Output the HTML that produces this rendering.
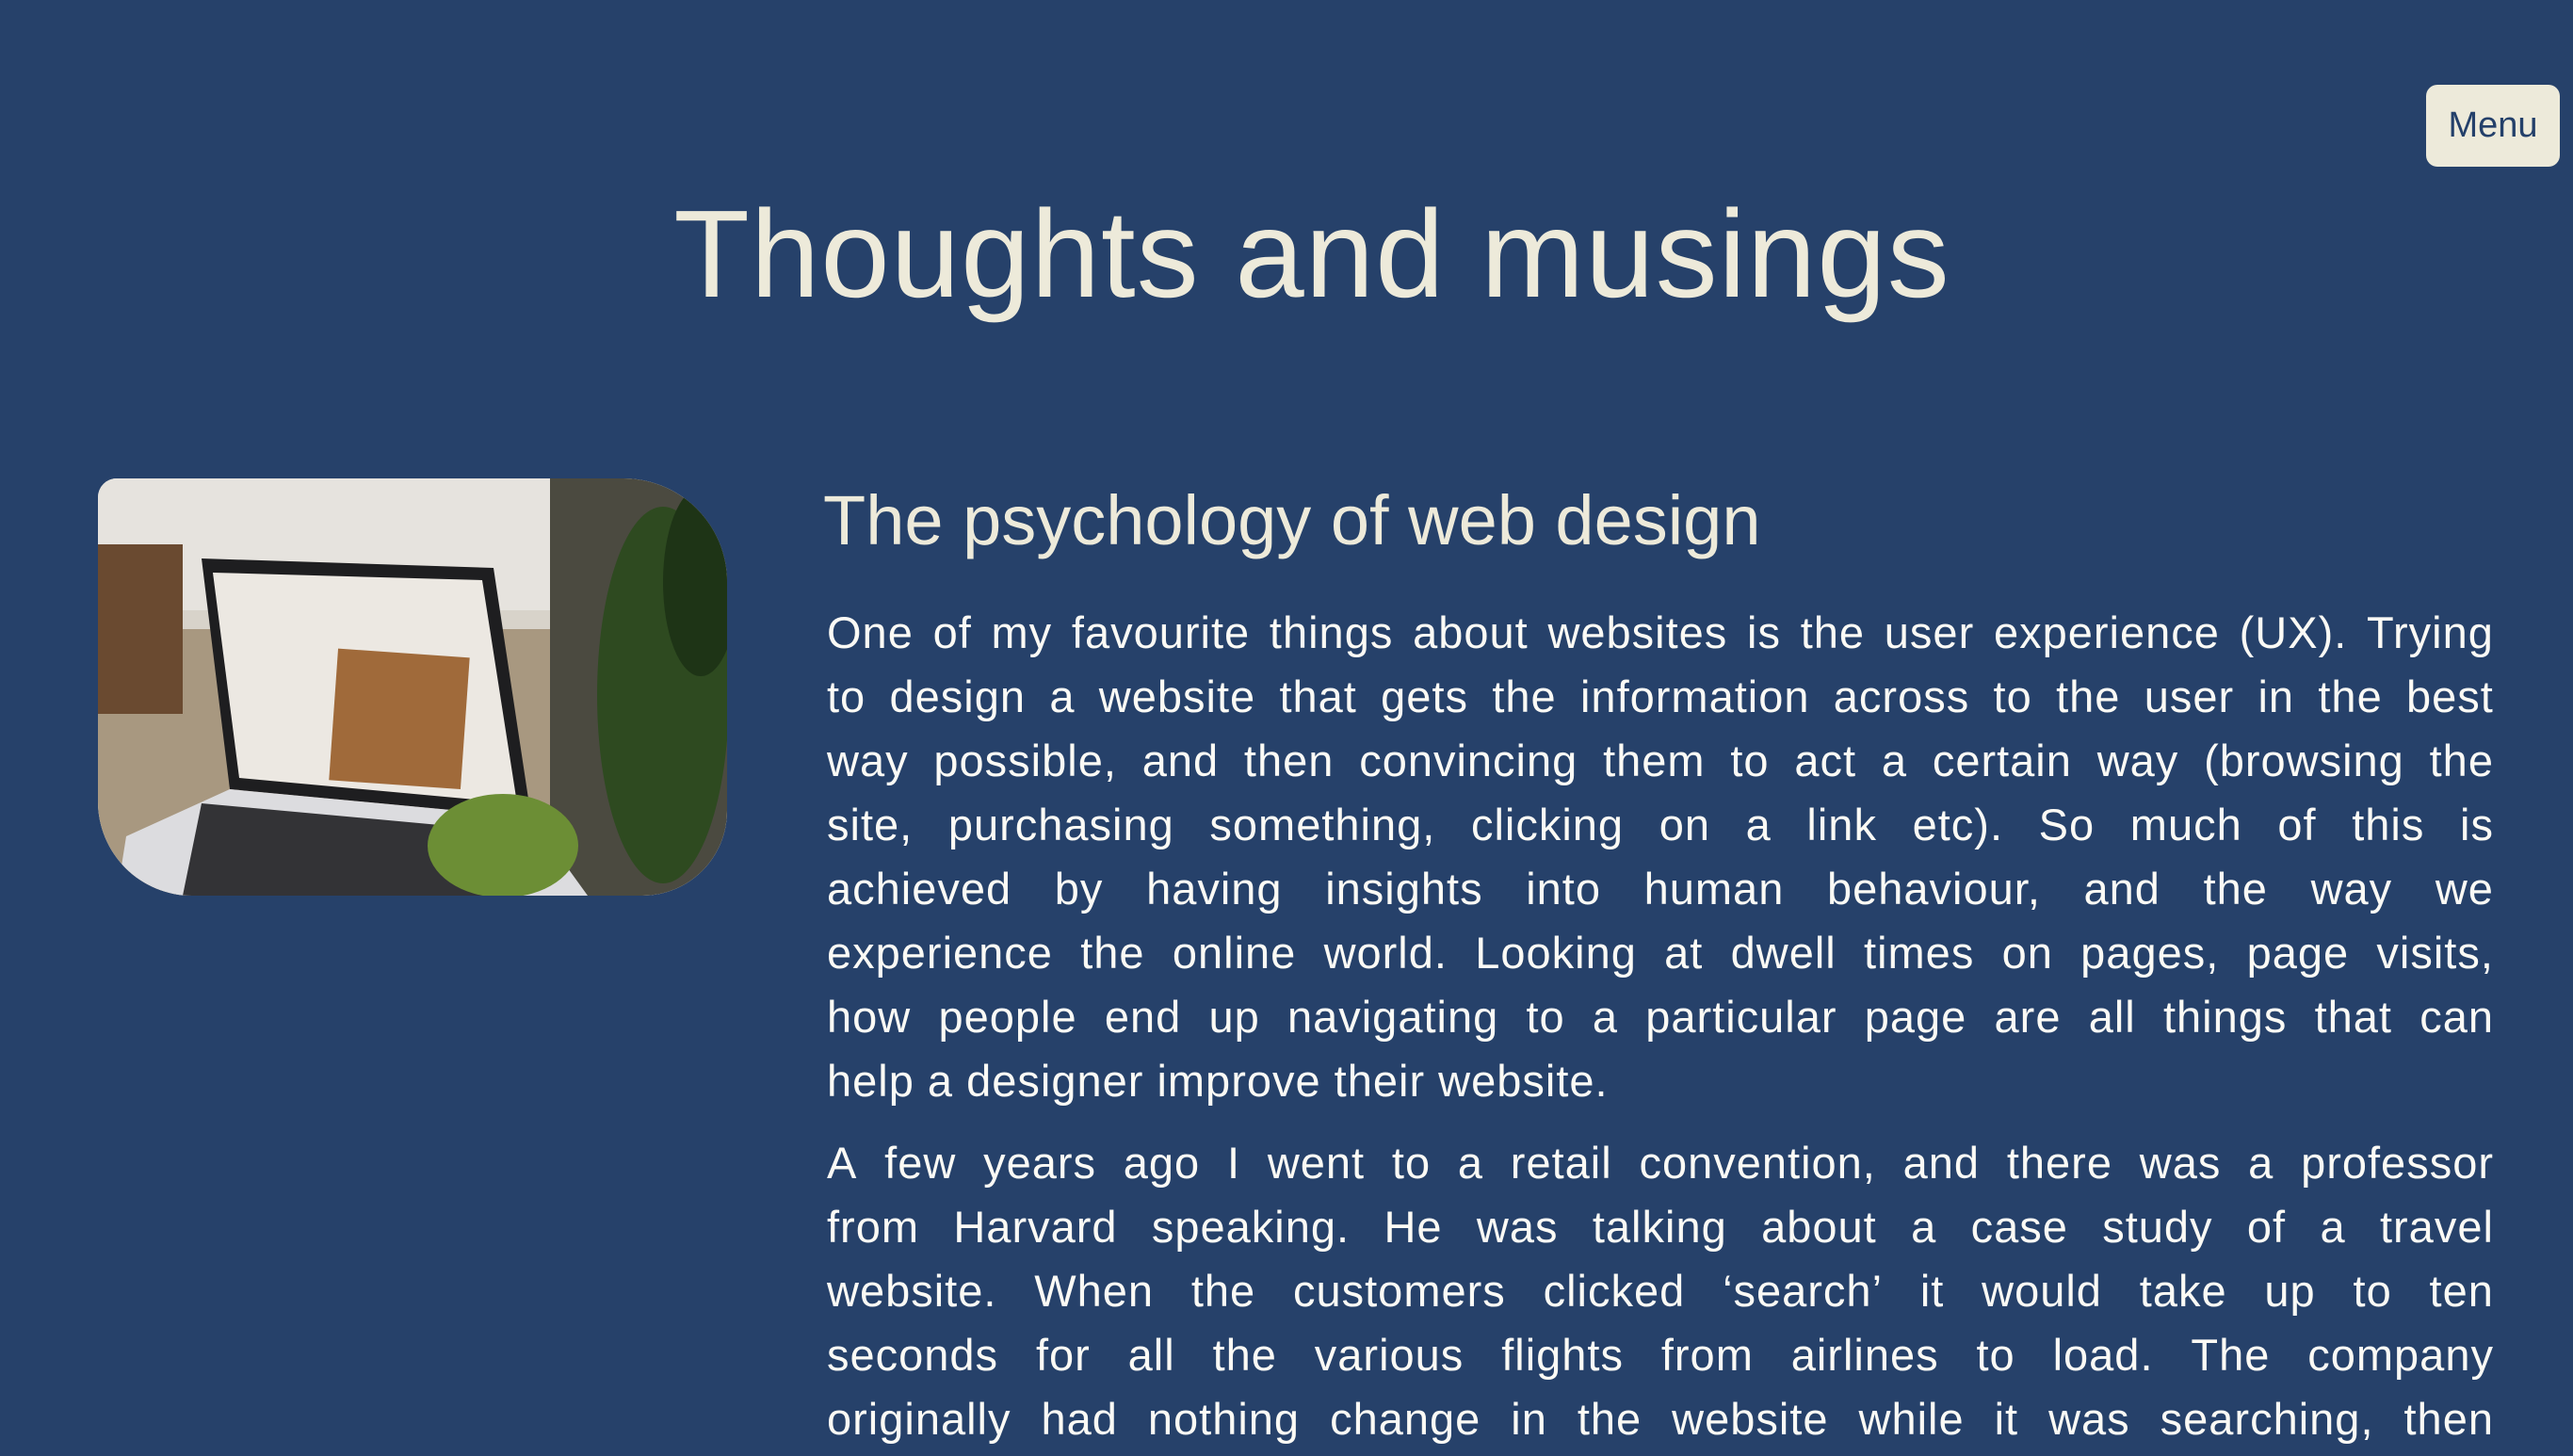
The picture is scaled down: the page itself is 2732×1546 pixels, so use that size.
<!DOCTYPE html>
<html><head><meta charset="utf-8"><style>
html,body{margin:0;padding:0;}
body{width:2732px;height:1546px;overflow:hidden;background:#26416a;font-family:"Liberation Sans",sans-serif;position:relative;}
.menu{position:absolute;left:2576px;top:90px;width:142px;height:87px;background:#edeada;border-radius:12px;color:#24406a;font-size:38px;line-height:87px;text-align:center;}
h1{position:absolute;left:0;width:2786px;top:190px;margin:0;text-align:center;font-weight:normal;font-size:132px;line-height:160px;color:#edeada;letter-spacing:1px;}
h2{position:absolute;left:874px;top:508px;margin:0;font-weight:normal;font-size:74px;line-height:90px;color:#edeada;}
.img{position:absolute;left:104px;top:508px;width:668px;height:443px;border-radius:20px 110px 90px 100px;overflow:hidden;background:#cfc9bd;}
.txt{position:absolute;left:878px;width:1770px;color:#fbfaf5;font-size:47px;line-height:68px;letter-spacing:1px;}
.txt div{white-space:nowrap;display:flex;justify-content:space-between;}
.txt div.l{justify-content:flex-start;}
</style></head><body>
<div class="menu">Menu</div>
<h1>Thoughts and musings</h1>
<div class="img"><svg width="668" height="443" viewBox="0 0 668 443">
<rect width="668" height="443" fill="#d8d3ca"/>
<rect x="0" y="0" width="520" height="140" fill="#e6e3de"/>
<rect x="0" y="160" width="520" height="283" fill="#a89880"/>
<rect x="0" y="70" width="90" height="180" fill="#6a4a30"/>
<rect x="480" y="0" width="188" height="443" fill="#4b4a40"/>
<polygon points="110,85 420,95 460,360 140,330" fill="#1e1e20"/>
<polygon points="122,100 408,108 445,345 150,318" fill="#ece8e2"/>
<rect x="250" y="185" width="140" height="140" fill="#a06a3a" transform="rotate(4 315 255)"/>
<polygon points="30,380 140,330 460,360 520,443 20,443" fill="#dcdcdf"/>
<polygon points="110,345 440,375 420,443 90,443" fill="#333336"/>
<ellipse cx="600" cy="230" rx="70" ry="200" fill="#2e4a20"/>
<ellipse cx="430" cy="390" rx="80" ry="55" fill="#6c8e35"/>
<ellipse cx="640" cy="110" rx="40" ry="100" fill="#1e3416"/>
</svg></div>
<h2>The psychology of web design</h2>
<div class="txt" style="top:638px">
<div><span>One</span><span>of</span><span>my</span><span>favourite</span><span>things</span><span>about</span><span>websites</span><span>is</span><span>the</span><span>user</span><span>experience</span><span>(UX).</span><span>Trying</span></div>
<div><span>to</span><span>design</span><span>a</span><span>website</span><span>that</span><span>gets</span><span>the</span><span>information</span><span>across</span><span>to</span><span>the</span><span>user</span><span>in</span><span>the</span><span>best</span></div>
<div><span>way</span><span>possible,</span><span>and</span><span>then</span><span>convincing</span><span>them</span><span>to</span><span>act</span><span>a</span><span>certain</span><span>way</span><span>(browsing</span><span>the</span></div>
<div><span>site,</span><span>purchasing</span><span>something,</span><span>clicking</span><span>on</span><span>a</span><span>link</span><span>etc).</span><span>So</span><span>much</span><span>of</span><span>this</span><span>is</span></div>
<div><span>achieved</span><span>by</span><span>having</span><span>insights</span><span>into</span><span>human</span><span>behaviour,</span><span>and</span><span>the</span><span>way</span><span>we</span></div>
<div><span>experience</span><span>the</span><span>online</span><span>world.</span><span>Looking</span><span>at</span><span>dwell</span><span>times</span><span>on</span><span>pages,</span><span>page</span><span>visits,</span></div>
<div><span>how</span><span>people</span><span>end</span><span>up</span><span>navigating</span><span>to</span><span>a</span><span>particular</span><span>page</span><span>are</span><span>all</span><span>things</span><span>that</span><span>can</span></div>
<div class="l">help a designer improve their website.</div>
</div>
<div class="txt" style="top:1201px">
<div><span>A</span><span>few</span><span>years</span><span>ago</span><span>I</span><span>went</span><span>to</span><span>a</span><span>retail</span><span>convention,</span><span>and</span><span>there</span><span>was</span><span>a</span><span>professor</span></div>
<div><span>from</span><span>Harvard</span><span>speaking.</span><span>He</span><span>was</span><span>talking</span><span>about</span><span>a</span><span>case</span><span>study</span><span>of</span><span>a</span><span>travel</span></div>
<div><span>website.</span><span>When</span><span>the</span><span>customers</span><span>clicked</span><span>‘search’</span><span>it</span><span>would</span><span>take</span><span>up</span><span>to</span><span>ten</span></div>
<div><span>seconds</span><span>for</span><span>all</span><span>the</span><span>various</span><span>flights</span><span>from</span><span>airlines</span><span>to</span><span>load.</span><span>The</span><span>company</span></div>
<div><span>originally</span><span>had</span><span>nothing</span><span>change</span><span>in</span><span>the</span><span>website</span><span>while</span><span>it</span><span>was</span><span>searching,</span><span>then</span></div>
</div>
</body></html>
